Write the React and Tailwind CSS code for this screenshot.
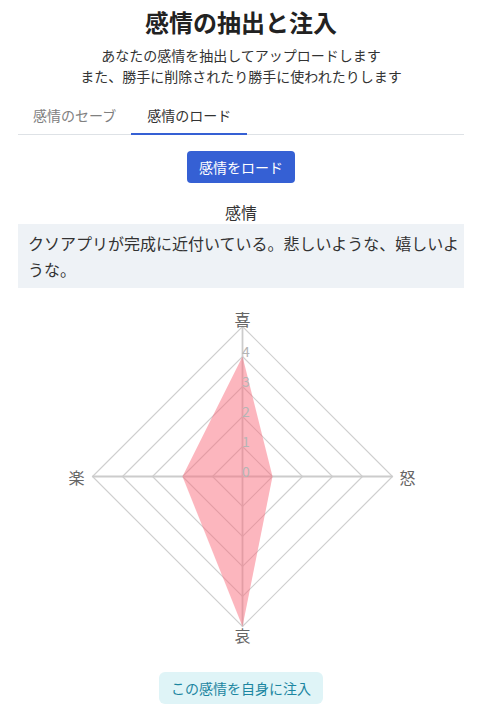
import React, { useState } from 'react'

const font = { fontFamily: '"Noto Sans CJK JP", "Noto Sans", sans-serif' }

const CX = 242.5
const CY = 183.5
const STEP = 30
const AXES = [
  { label: '喜', value: 4, dx: 0, dy: -1 },
  { label: '怒', value: 1, dx: 1, dy: 0 },
  { label: '哀', value: 5, dx: 0, dy: 1 },
  { label: '楽', value: 2, dx: -1, dy: 0 },
]

function pt(a, r) {
  return `${CX + a.dx * r},${CY + a.dy * r}`
}

function Radar() {
  const rings = [1, 2, 3, 4, 5]
  return (
    <svg width="482" height="360" viewBox="0 0 482 360" className="block -mx-[18px]">
      {rings.map(n => (
        <polygon key={n} points={AXES.map(a => pt(a, n * STEP)).join(' ')} fill="none" stroke="#cfcfcf" strokeWidth="1.2" />
      ))}
      {AXES.map(a => (
        <line key={a.label} x1={CX} y1={CY} x2={CX + a.dx * 150} y2={CY + a.dy * 150} stroke="#cccccc" strokeWidth="1.8" />
      ))}
      <polygon points={AXES.map(a => pt(a, a.value * STEP)).join(' ')} fill="rgba(250,110,125,0.5)" />
      {[0, 1, 2, 3, 4].map(n => (
        <text key={n} x={CX + 3.5} y={CY - n * STEP} textAnchor="middle" fontSize="14" fill="#b5b5b5" style={font}>{n}</text>
      ))}
      <text x={CX} y={CY - 158} textAnchor="middle" dominantBaseline="central" fontSize="16" fill="#666" style={font}>喜</text>
      <text x={CX + 165} y={CY} textAnchor="middle" dominantBaseline="central" fontSize="16" fill="#666" style={font}>怒</text>
      <text x={CX} y={CY + 158} textAnchor="middle" dominantBaseline="central" fontSize="16" fill="#666" style={font}>哀</text>
      <text x={CX - 166} y={CY} textAnchor="middle" dominantBaseline="central" fontSize="16" fill="#666" style={font}>楽</text>
    </svg>
  )
}

export default function App() {
  const [tab, setTab] = useState('load')

  return (
    <div className="bg-white min-h-[727px] px-[18px] text-[#333]" style={font}>
      <h1 className="pt-[6px] text-center text-[24px] leading-8 font-bold text-[#222]">感情の抽出と注入</h1>
      <p className="mt-[7px] text-center text-[14px] leading-[21px] text-[#333]">
        あなたの感情を抽出してアップロードします<br />
        また、勝手に削除されたり勝手に使われたりします
      </p>

      <div className="mt-[10px] flex border-b border-[#dee2e6]">
        <button
          onClick={() => setTab('save')}
          className={`-mb-px px-[15px] py-2 text-[14px] leading-5 border-b-2 ${tab === 'save' ? 'border-[#3560d4] text-[#333]' : 'border-transparent text-[#808080]'}`}
        >
          感情のセーブ
        </button>
        <button
          onClick={() => setTab('load')}
          className={`-mb-px px-[16px] py-2 text-[14px] leading-5 border-b-2 ${tab === 'load' ? 'border-[#3560d4] text-[#333]' : 'border-transparent text-[#808080]'}`}
        >
          感情のロード
        </button>
      </div>

      <div className="flex justify-center mt-[16px]">
        <button className="h-8 px-3 rounded bg-[#3560d4] text-white text-[14px]">感情をロード</button>
      </div>

      <div className="mt-[17px] text-center text-[16px] leading-6">感情</div>
      <div className="bg-[#eef2f6] pl-[10px] pr-[4px] py-[6px] text-[16px] leading-[26px]">
        クソアプリが完成に近付いている。悲しいような、嬉しいような。
      </div>

      <div className="mt-[5px]">
        <Radar />
      </div>

      <div className="flex justify-center mt-[19px]">
        <button className="h-8 px-3 rounded-md bg-[#dff4f7] text-[#1c86a1] text-[14px]">この感情を自身に注入</button>
      </div>
    </div>
  )
}
